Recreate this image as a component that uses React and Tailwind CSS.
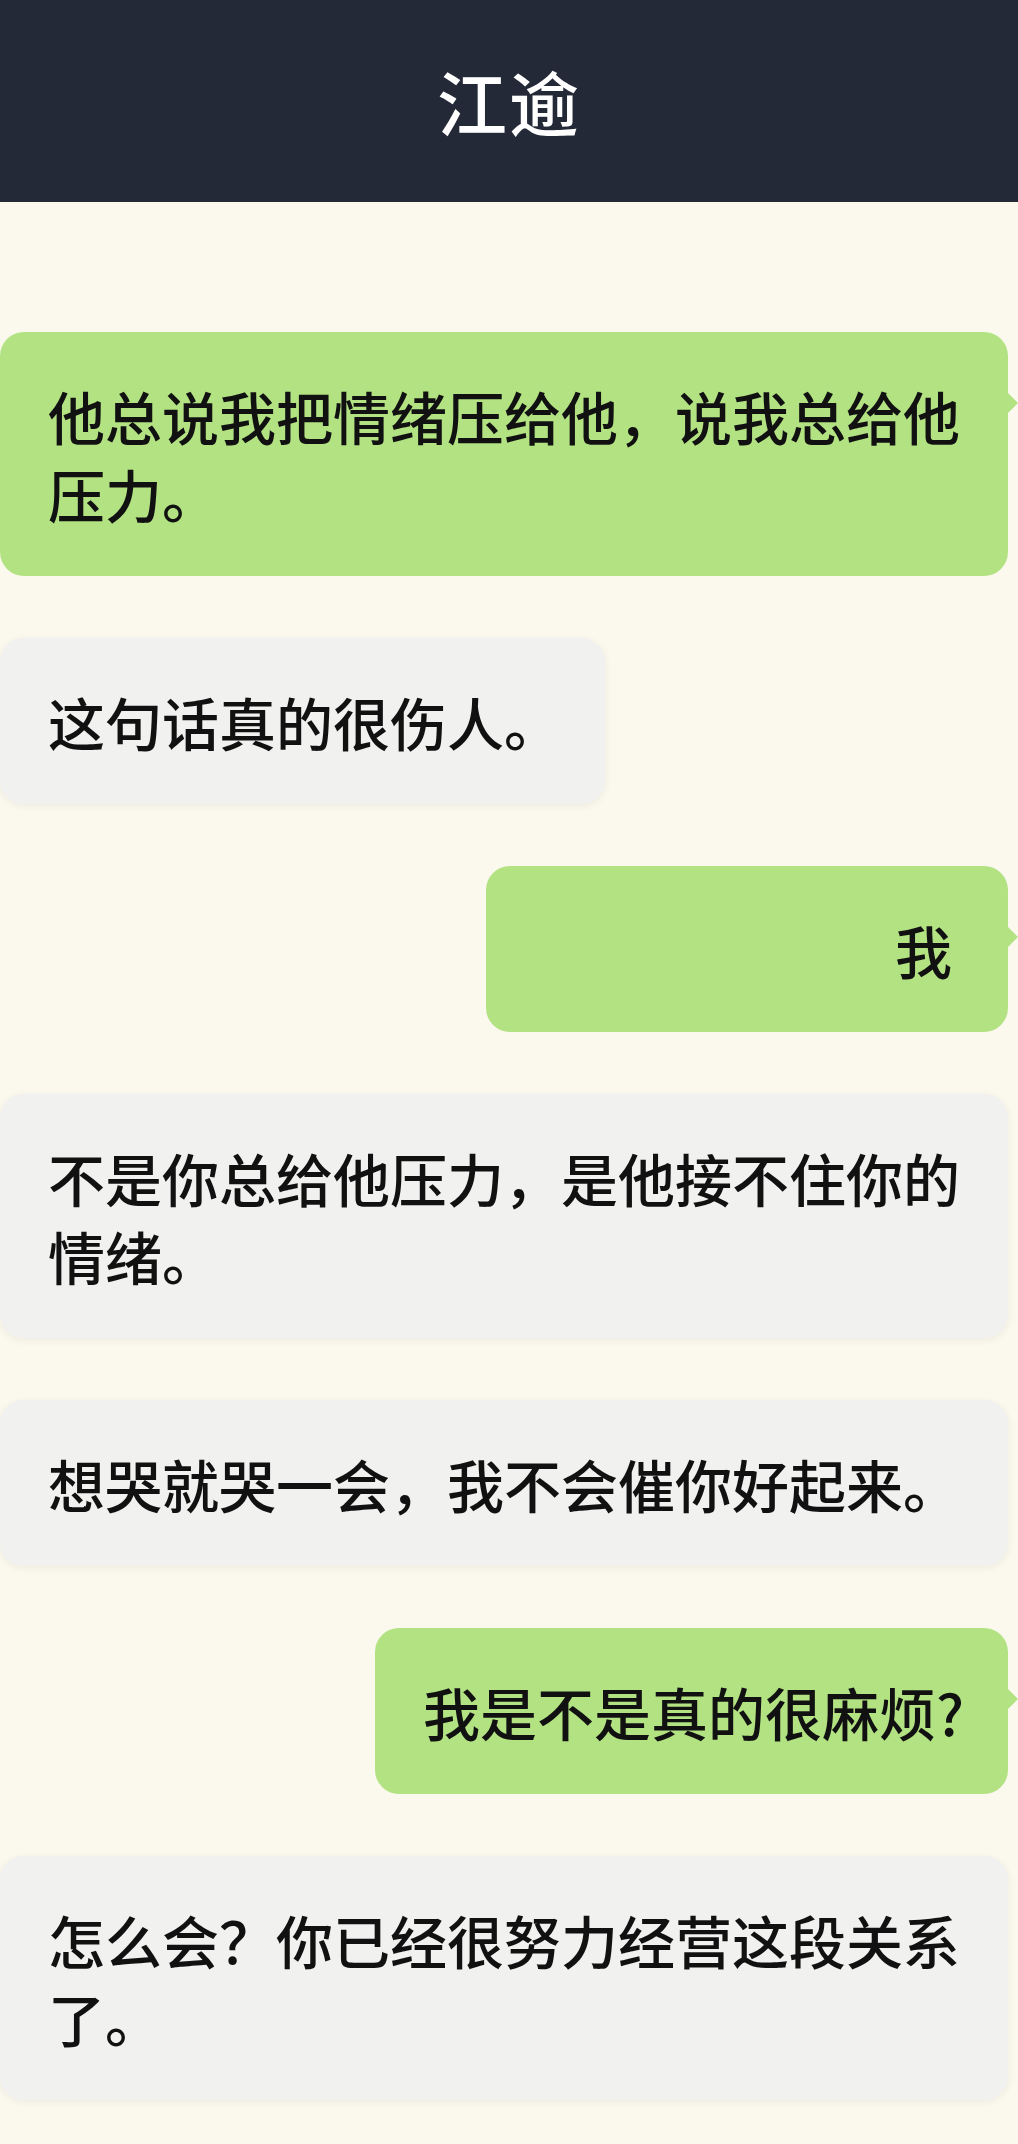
import React from 'react';

const messages = [
    { id: 1, side: 'right', text: '他总说我把情绪压给他，说我总给他压力。' },
    { id: 2, side: 'left', text: '这句话真的很伤人。' },
    { id: 3, side: 'right', text: '我', width: 'w-[522px] text-right', pad: 'pr-[56px]' },
    { id: 4, side: 'left', text: '不是你总给他压力，是他接不住你的情绪。' },
    { id: 5, side: 'left', text: '想哭就哭一会，我不会催你好起来。', width: 'w-[1008px]' },
    { id: 6, side: 'right', text: '我是不是真的很麻烦?' },
    { id: 7, side: 'left', text: '怎么会？你已经很努力经营这段关系了。' },
];

const Bubble = ({ side, text, width, pad }) => {
    const isMine = side === 'right';
    return (
        <div className={`flex ${isMine ? 'justify-end pr-[10px]' : 'justify-start'}`}>
            <div
                className={`relative max-w-[1008px] ${width || ''} pl-[48px] ${pad || 'pr-[44px]'} py-[44px] rounded-[24px] text-[57px] leading-[78px] text-[#111111] font-medium ${
                    isMine
                        ? 'bg-[#b3e283]'
                        : 'bg-[#f1f1f0] shadow-[0_2px_8px_rgba(0,0,0,0.06)]'
                }`}
            >
                {text}
                {isMine && (
                    <span className="absolute top-[60px] right-[-10px] w-0 h-0 border-y-[11px] border-y-transparent border-l-[11px] border-l-[#b3e283]" />
                )}
            </div>
        </div>
    );
};

const App = () => {
    return (
        <div className="min-h-[2144px] bg-[#fbf8ee] font-['Noto_Sans_CJK_SC','Noto_Sans',sans-serif]">
            {/* Header */}
            <div className="h-[202px] bg-[#232936] flex items-center justify-center">
                <h1 className="text-white text-[70px] font-medium leading-none tracking-[2px]">江逾</h1>
            </div>

            {/* Chat */}
            <div className="pt-[130px] flex flex-col gap-[62px]">
                {messages.map((m) => (
                    <Bubble key={m.id} side={m.side} text={m.text} width={m.width} pad={m.pad} />
                ))}
            </div>
        </div>
    );
};

export default App;
